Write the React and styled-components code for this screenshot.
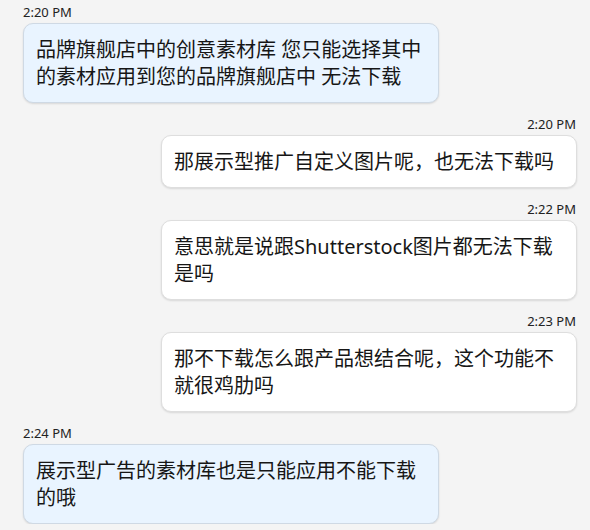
import styled, { createGlobalStyle } from "styled-components";

const GlobalStyle = createGlobalStyle`
  html, body {
    margin: 0;
    padding: 0;
    background: #f4f4f4;
  }
`;

const Thread = styled.div`
  display: flex;
  flex-direction: column;
  gap: 13px;
  padding: 4px 13px 0 23px;
  font-family: "Noto Sans", "Noto Sans CJK SC", sans-serif;
`;

const Message = styled.div`
  display: flex;
  flex-direction: column;
  align-items: ${({ $mine }) => ($mine ? "flex-end" : "flex-start")};
  gap: 3px;
`;

const Time = styled.div`
  font-size: 13px;
  line-height: 16px;
  color: #222;
  padding-right: 1px;
`;

const Bubble = styled.div`
  box-sizing: border-box;
  width: 416px;
  padding: 12px;
  border-radius: 10px;
  border: 1px solid ${({ $mine }) => ($mine ? "#dedede" : "#cfd9e4")};
  background: ${({ $mine }) => ($mine ? "#ffffff" : "#e9f4ff")};
  box-shadow: 0 1px 2px rgba(0, 0, 0, 0.12);
  font-size: 20px;
  line-height: 27px;
  color: #161616;
`;

const messages = [
  { time: "2:20 PM", text: "品牌旗舰店中的创意素材库 您只能选择其中的素材应用到您的品牌旗舰店中 无法下载" },
  { time: "2:20 PM", mine: true, text: "那展示型推广自定义图片呢，也无法下载吗" },
  { time: "2:22 PM", mine: true, text: "意思就是说跟Shutterstock图片都无法下载是吗" },
  { time: "2:23 PM", mine: true, text: "那不下载怎么跟产品想结合呢，这个功能不就很鸡肋吗" },
  { time: "2:24 PM", text: "展示型广告的素材库也是只能应用不能下载的哦" },
];

export default function App() {
  return (
    <>
      <GlobalStyle />
      <Thread>
        {messages.map((m, i) => (
          <Message key={i} $mine={m.mine}>
            <Time>{m.time}</Time>
            <Bubble $mine={m.mine}>{m.text}</Bubble>
          </Message>
        ))}
      </Thread>
    </>
  );
}
